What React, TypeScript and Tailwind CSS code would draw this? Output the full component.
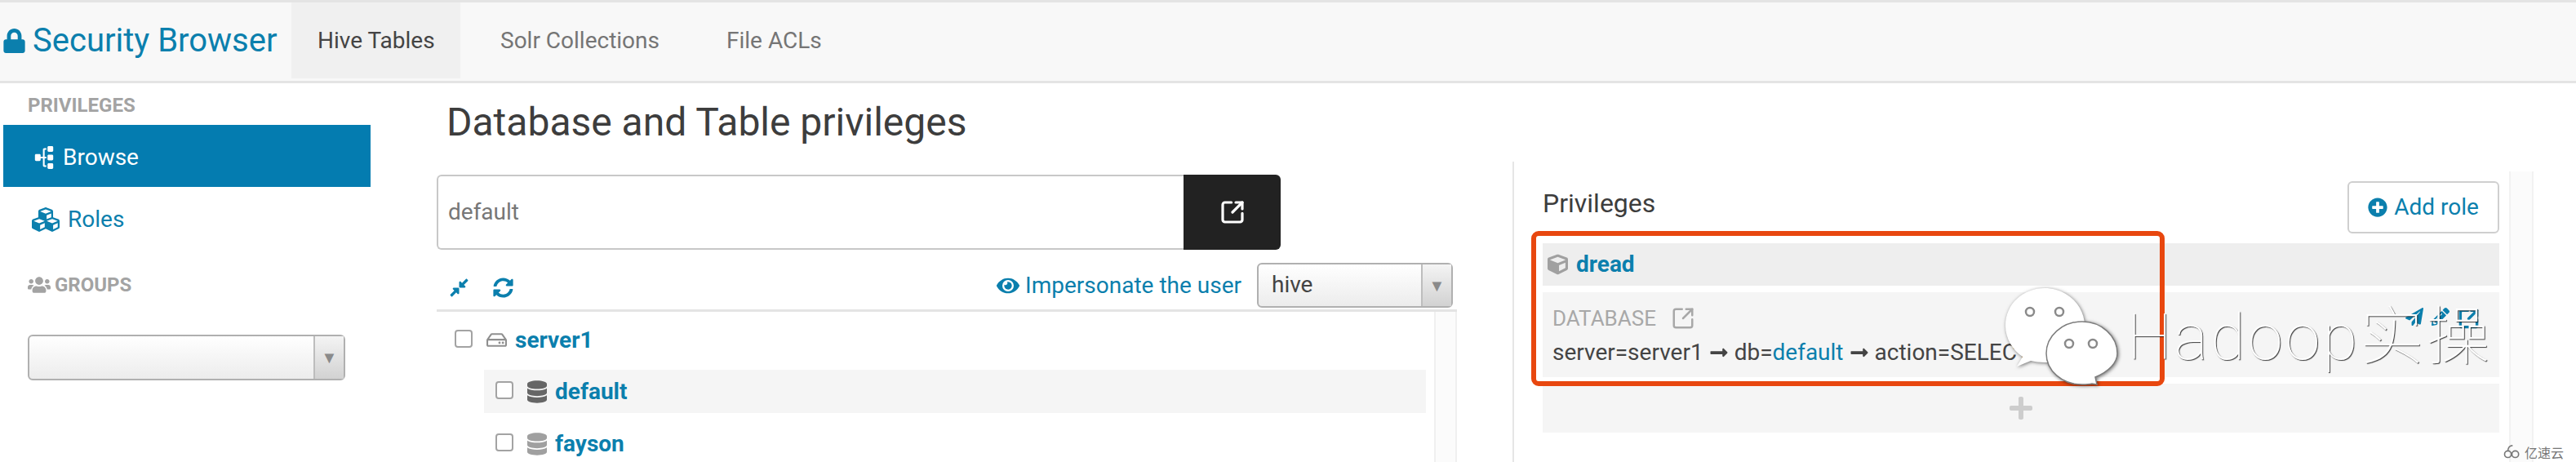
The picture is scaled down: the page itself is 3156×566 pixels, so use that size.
import {
  FaCompressAlt,
  FaCube,
  FaCubes,
  FaDatabase,
  FaEye,
  FaLock,
  FaLongArrowAltRight,
  FaPaperPlane,
  FaPencilAlt,
  FaPlus,
  FaPlusCircle,
  FaRegHdd,
  FaSitemap,
  FaSyncAlt,
  FaUsers,
} from 'react-icons/fa'
import { SquareArrowOutUpRight } from 'lucide-react'

function Checkbox() {
  return <span className="block w-[22px] h-[22px] shrink-0 -translate-y-[2px] rounded-[4px] border-2 border-[#a3a3a3] bg-white" />
}

function SelectBox({ value, className }: { value?: string; className: string }) {
  return (
    <div className={`flex rounded-[6px] border-2 border-[#b0b0b0] bg-linear-to-b from-white to-[#ececec] ${className}`}>
      <div className="flex-1 pl-4 text-[28px] leading-[50px] text-[#444]">{value}</div>
      <div className="flex w-[37px] items-center justify-center border-l-2 border-[#bdbdbd] bg-linear-to-b from-[#f4f4f4] to-[#d2d2d2] text-[20px] text-[#8a8a8a]">
        ▼
      </div>
    </div>
  )
}

function WeChatBubbles() {
  return (
    <svg width="140" height="120" viewBox="0 0 140 120" className="absolute left-[2456px] top-[352px] drop-shadow-[1px_1px_2px_rgba(0,0,0,0.55)]">
      <path d="M49 1C23 1 1 20 1 47c0 16 9 30 21 38l-7 12 17-7c5 1 11 2 17 2 27 0 49-20 49-45S76 1 49 1z" fill="#fff" />
      <circle cx="31" cy="30" r="5" fill="#fff" stroke="#8a8a8a" strokeWidth="2.5" />
      <circle cx="67" cy="30" r="5" fill="#fff" stroke="#8a8a8a" strokeWidth="2.5" />
      <path d="M95 42c-25 0-44 18-44 39s19 38 44 38c4 0 8 0 12-1l6 1-2-9c17-7 27-18 27-29 0-21-19-39-43-39z" fill="#fff" stroke="#7d7d7d" strokeWidth="1.5" />
      <circle cx="79" cy="69" r="5" fill="#fff" stroke="#8a8a8a" strokeWidth="2.5" />
      <circle cx="108" cy="69" r="5" fill="#fff" stroke="#8a8a8a" strokeWidth="2.5" />
    </svg>
  )
}

export default function App() {
  return (
    <div className="relative h-[566px] w-[3156px] overflow-hidden bg-white font-['Roboto',sans-serif] text-[#444]">
      {/* top nav */}
      <nav className="flex h-[102px] border-t-[3px] border-b-[3px] border-[#e4e4e4] bg-[#f8f8f8] pb-[3px]">
        <a className="flex w-[357px] items-center pl-1 text-[40px] text-[#0b7fad]">
          <FaLock className="mr-[9px] h-[30px] w-[27px]" />
          Security Browser
        </a>
        <a className="flex w-[207px] items-center pl-[32px] bg-[#f0f0f0] text-[28px] text-[#444]">Hive Tables</a>
        <a className="ml-[49px] flex items-center text-[28px] text-[#757575]">Solr Collections</a>
        <a className="ml-[82px] flex items-center text-[28px] text-[#757575]">File ACLs</a>
      </nav>

      <div className="flex">
        {/* sidebar */}
        <aside className="w-[535px] shrink-0">
          <div className="h-[51px] pt-[14px] pl-[34px] text-[24px] leading-[26px] font-bold text-[#a3a3a3]">PRIVILEGES</div>
          <a className="ml-1 flex h-[76px] w-[450px] items-center bg-[#047cb0] pt-[3px] pl-[36px] text-[28px] text-white">
            <FaSitemap className="mr-[9px] h-[28px] w-[28px] -rotate-90" />
            Browse
          </a>
          <a className="flex h-[76px] items-center pt-[3px] pl-[38px] text-[28px] text-[#0b7fad]">
            <FaCubes className="mr-[9px] h-[34px] w-[36px]" />
            Roles
          </a>
          <div className="mt-[31px] flex h-[26px] items-center pl-[34px] text-[24px] font-bold text-[#a3a3a3]">
            <FaUsers className="mr-[5px] h-[28px] w-[28px]" />
            GROUPS
          </div>
          <SelectBox className="mt-[48px] ml-[34px] h-[56px] w-[389px]" />
        </aside>

        {/* tables column */}
        <section className="w-[1250px] shrink-0">
          <div className="h-[112px] pt-[20px] pl-[12px]">
            <h1 className="text-[48px] leading-[56px] text-[#3d3d3d]">Database and Table privileges</h1>
          </div>
          <div className="flex h-[92px] w-[1034px]">
            <div className="flex-1 rounded-l-[6px] border-2 border-r-0 border-[#c8c8c8] pl-[12px] text-[28px] leading-[88px] text-[#777]">default</div>
            <button className="flex w-[119px] items-center justify-center rounded-r-[6px] bg-[#222] text-white">
              <SquareArrowOutUpRight size={32} strokeWidth={2.4} />
            </button>
          </div>
          <div className="flex h-[73px] items-start pt-[16px]">
            <div className="flex items-center self-center pt-[3px] pl-[15px] text-[#0b7fad]">
              <FaCompressAlt className="h-[25px] w-[25px]" />
              <FaSyncAlt className="ml-[29px] h-[25px] w-[25px]" />
            </div>
            <div className="ml-auto flex items-center pr-[5px] text-[#0b7fad]">
              <FaEye className="mr-[7px] h-[26px] w-[28px]" />
              <span className="text-[28px] leading-[52px]">Impersonate the user</span>
              <SelectBox value="hive" className="ml-[19px] h-[55px] w-[240px]" />
            </div>
          </div>
          <div className="flex h-[187px] border-t-[3px] border-[#e4e4e4]">
            <div className="w-[1222px] shrink-0">
              <div className="mt-[22px] flex h-[26px] items-center pl-[22px] text-[28px] font-bold text-[#0b7fad]">
                <Checkbox />
                <FaRegHdd className="mr-[10px] ml-[17px] h-[25px] w-[25px] -translate-y-[1px] text-[#8f8f8f]" />
                server1
              </div>
              <div className="mt-[23px] mr-[10px] ml-[58px] flex h-[53px] items-center bg-[#f5f5f5] pl-[14px] text-[28px] font-bold text-[#0b7fad]">
                <Checkbox />
                <FaDatabase className="mr-[10px] ml-[17px] h-[28px] w-[24px] text-[#666]" />
                default
              </div>
              <div className="mt-[11px] ml-[58px] flex h-[53px] items-center pl-[14px] text-[28px] font-bold text-[#0b7fad]">
                <Checkbox />
                <FaDatabase className="mr-[10px] ml-[17px] h-[28px] w-[24px] text-[#a0a0a0]" />
                fayson
              </div>
            </div>
            <div className="w-[28px] border-x-2 border-[#f0f0f0] bg-[#fbfbfb]" />
          </div>
        </section>

        {/* privileges column */}
        <section className="mt-[96px] ml-[68px] flex h-[368px] border-l-2 border-[#e6e6e6]">
          <div className="w-[1207px] shrink-0 pt-[24px] pl-[35px]">
            <div className="flex h-[64px] items-start justify-between">
              <h2 className="text-[32px] leading-[54px] text-[#3d3d3d]">Privileges</h2>
              <button className="flex h-[64px] w-[186px] items-center justify-center rounded-[6px] border-2 border-[#cfcfcf] text-[28px] text-[#0b7fad]">
                <FaPlusCircle className="mr-[8px] h-[24px] w-[24px]" />
                Add role
              </button>
            </div>
            <div className="mt-[12px] flex h-[52px] items-center bg-[#eeeeee] pl-[6px] text-[28px] font-bold text-[#0b7fad]">
              <FaCube className="mr-[10px] h-[28px] w-[25px] text-[#a0a0a0]" />
              dread
            </div>
            <div className="relative mt-[8px] h-[104px] bg-[#f5f5f5] pt-[18px] pl-[12px]">
              <div className="flex h-[28px] items-center text-[26px] text-[#a8a8a8]">
                DATABASE
                <SquareArrowOutUpRight size={30} strokeWidth={2} className="ml-[18px]" />
              </div>
              <div className="mt-[12px] flex items-center text-[28px] leading-[32px] text-[#444]">
                server=server1
                <FaLongArrowAltRight className="mx-[6px] h-[24px] w-[26px]" />
                db=<span className="text-[#0b7fad]">default</span>
                <FaLongArrowAltRight className="mx-[6px] h-[24px] w-[26px]" />
                action=SELECT
              </div>
              <div className="absolute top-[19px] right-[24px] flex gap-[10px] text-[#0b7fad]">
                <FaPaperPlane className="h-[22px] w-[22px]" />
                <FaPencilAlt className="h-[22px] w-[22px]" />
                <SquareArrowOutUpRight size={27} strokeWidth={3} />
              </div>
            </div>
            <div className="mt-[8px] flex h-[60px] items-center justify-center bg-[#f5f5f5] text-[#cdcdcd]">
              <FaPlus className="h-[32px] w-[32px]" />
            </div>
          </div>
          <div className="mt-[12px] ml-[12px] w-[30px] border-x-2 border-[#f2f2f2] bg-[#fbfbfb]" />
        </section>
      </div>

      {/* annotation and watermark laid over the screenshot */}
      <div className="absolute top-[283px] left-[1876px] h-[190px] w-[776px] rounded-[9px] border-[6px] border-[#e8470f]" />
      <WeChatBubbles />
      <div className="absolute top-[358px] left-[2606px] text-[78px] leading-[112px] font-thin tracking-[3px] whitespace-nowrap text-white [font-family:'Roboto','Noto_Sans_CJK_SC',sans-serif] [text-shadow:1px_1px_1px_rgba(0,0,0,0.75)]">
        Hadoop实操
      </div>
      <div className="absolute top-[545px] left-[3065px] flex items-center text-[#777]">
        <svg width="25" height="18" viewBox="0 0 26 22" fill="none" stroke="#777" strokeWidth="2">
          <circle cx="7" cy="14" r="5" />
          <circle cx="18" cy="14" r="5" />
          <path d="M7 9c0-5 3-8 7-8" />
        </svg>
        <span className="ml-[3px] text-[16px] leading-[18px] [font-family:'Noto_Sans_CJK_SC',sans-serif]">亿速云</span>
      </div>
    </div>
  )
}
